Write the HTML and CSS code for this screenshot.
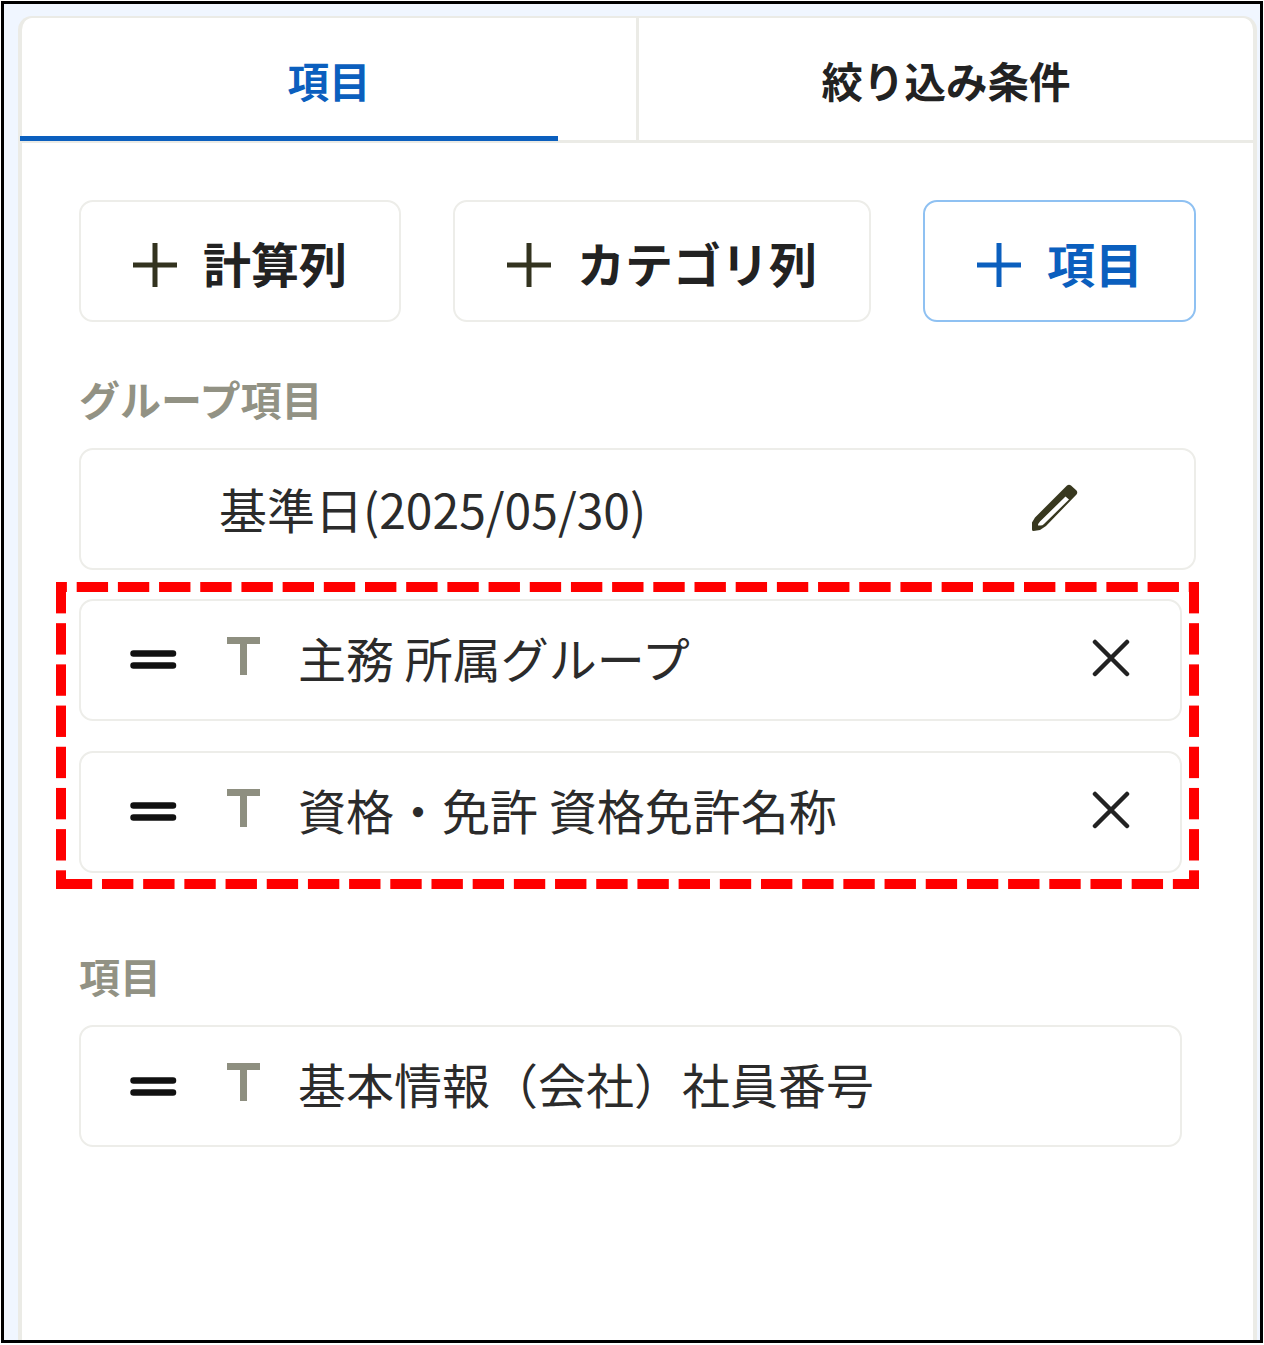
FILE: index.html
```html
<!DOCTYPE html>
<html lang="ja">
	<head>
		<meta charset="utf-8" />
		<title>項目</title>
		<link rel="stylesheet" href="styles.css">
	</head>
	<body>
		<div id="frame">
			<div id="panel">
				<nav class="tabs">
					<div class="tab active">項目</div>
					<div class="tab">絞り込み条件</div>
				</nav>

				<section class="content">
					<div class="buttons">
						<div class="btn">
							<svg class="plus" viewBox="0 0 44 44"><path d="M22 0V44M0 22H44" /></svg>
							<span>計算列</span>
						</div>
						<div class="btn">
							<svg class="plus" viewBox="0 0 44 44"><path d="M22 0V44M0 22H44" /></svg>
							<span>カテゴリ列</span>
						</div>
						<div class="btn primary">
							<svg class="plus" viewBox="0 0 44 44"><path d="M22 0V44M0 22H44" /></svg>
							<span>項目</span>
						</div>
					</div>

					<h2 class="group-label first">グループ項目</h2>
					<div class="row date">
						<span class="name">基準日(2025/05/30)</span>
						<svg class="pencil" viewBox="0 0 46 47"><path fill-rule="evenodd" d="M35 1.500Q37 0 39 1.500L44.500 6.500Q46 8.500 44.500 10.500L14 42L8 46L1.500 47Q0 47 0 45.500V38.500L3 33.500ZM33.500 12.500L8 37.500Q6 39.500 6 41.500H8.500Q10.500 41.500 12 40L37 15.500Z" /></svg>
					</div>

					<div class="highlight">
						<div class="row">
							<svg class="grip" viewBox="0 0 48 20"><path d="M3.500 3.500H43M3.500 15.500H43" /></svg>
							<svg class="type" viewBox="0 0 33 38"><path d="M0 3.500H33M16.500 3.500V38" /></svg>
							<span class="name">主務 所属グループ</span>
							<svg class="close" viewBox="0 0 38 38"><path d="M3 3L35 35M35 3L3 35" /></svg>
						</div>
						<div class="row">
							<svg class="grip" viewBox="0 0 48 20"><path d="M3.500 3.500H43M3.500 15.500H43" /></svg>
							<svg class="type" viewBox="0 0 33 38"><path d="M0 3.500H33M16.500 3.500V38" /></svg>
							<span class="name">資格・免許 資格免許名称</span>
							<svg class="close" viewBox="0 0 38 38"><path d="M3 3L35 35M35 3L3 35" /></svg>
						</div>
					</div>

					<h2 class="group-label second">項目</h2>
					<div class="row narrow">
						<svg class="grip" viewBox="0 0 48 20"><path d="M3.500 3.500H43M3.500 15.500H43" /></svg>
						<svg class="type" viewBox="0 0 33 38"><path d="M0 3.500H33M16.500 3.500V38" /></svg>
						<span class="name">基本情報（会社）社員番号</span>
					</div>
				</section>
			</div>
		</div>
	</body>
</html>
```

FILE: styles.css
```css
*{
	box-sizing: border-box;
}

body{
	margin: 0;
	background-color: #FFFFFF;
	font-family: "Noto Sans CJK JP", "Noto Sans", sans-serif;
}

#frame{
	width: 1262px;
	height: 1342px;
	margin: 1px;
	border: 3px solid #000000;
	padding: 12px 3px 0 14px;
	background-color: #F0F6FF;
}

#panel{
	height: 100%;
	background-color: #FFFFFF;
	border: 2px solid #EBEBE6;
	border-left-width: 4px;
	border-right-width: 4px;
	border-bottom: none;
	border-radius: 14px 14px 0 0;
}

.tabs{
	display: flex;
	height: 125px;
	border-bottom: 3px solid #EBEBE6;
}

.tab{
	flex: 1;
	display: flex;
	align-items: center;
	justify-content: center;
	padding-top: 3px;
	font-size: 41.5px;
	font-weight: bold;
	line-height: 1;
	color: #222222;
}

.tab + .tab{
	border-left: 3px solid #EBEBE6;
}

.tab.active{
	color: #0B5FBE;
	position: relative;
}

/* underline is shorter than the tab itself */
.tab.active::after{
	content: "";
	position: absolute;
	left: -2px;
	bottom: -1px;
	width: 538px;
	height: 5px;
	background-color: #0B5FBE;
}

.content{
	padding: 57px 57px 0 57px;
}

.buttons{
	display: flex;
	gap: 52px;
}

.btn{
	display: flex;
	align-items: center;
	gap: 26px;
	height: 122px;
	padding: 0 52px;
	border: 2px solid #EDEDE9;
	border-radius: 14px;
	font-size: 48px;
	font-weight: bold;
	line-height: 1;
	white-space: nowrap;
	color: #222222;
}

.btn span{
	margin-top: 2px;
}

.btn.primary{
	padding-right: 51px;
	border-color: #8FC1F2;
	color: #0B5FBE;
}

.plus{
	flex: none;
	width: 44px;
	height: 44px;
	margin-top: 8px;
	fill: none;
	stroke: #33331F;
	stroke-width: 5;
}

.primary .plus{
	stroke: #0B5FBE;
}

.group-label{
	margin: 0;
	font-size: 41px;
	font-weight: bold;
	line-height: 40px;
	color: #929284;
}

.group-label.first{
	margin-top: 56px;
	margin-bottom: 30px;
}

.group-label.second{
	margin-top: 66px;
	margin-bottom: 30px;
}

.row{
	display: flex;
	align-items: center;
	height: 122px;
	padding: 0 50px 0 49px;
	background-color: #FFFFFF;
	border: 2px solid #EDEDE9;
	border-radius: 14px;
}

.row.date{
	padding: 0 116px 0 138px;
	width: 1117px;
}

.row.narrow{
	width: 1103px;
}

.name{
	margin-bottom: 6px;
	font-size: 48px;
	line-height: 1;
	white-space: nowrap;
	color: #2B2B2B;
}

.date .name{
	margin-bottom: 2px;
}

.highlight{
	display: flex;
	flex-direction: column;
	gap: 30px;
	width: 1143px;
	height: 307px;
	margin: 12px -3px 0 -23px;
	padding: 17px 17px 0 23px;
	background-image:
		linear-gradient(90deg, #FF0000 31px, transparent 31px),
		linear-gradient(90deg, #FF0000 31px, transparent 31px),
		linear-gradient(180deg, #FF0000 31px, transparent 31px),
		linear-gradient(180deg, #FF0000 31px, transparent 31px);
	background-size: 41.2px 10px, 41.2px 10px, 10px 41.2px, 10px 41.2px;
	background-position: 20.7px 0, 4.8px 100%, 0 0, 100% 0;
	background-repeat: repeat-x, repeat-x, repeat-y, repeat-y;
}

.grip{
	flex: none;
	width: 48px;
	height: 20px;
	fill: none;
	stroke: #111111;
	stroke-width: 6.500;
	stroke-linecap: round;
}

.narrow .grip{
	margin-top: 2px;
}

.type{
	flex: none;
	width: 33px;
	height: 38px;
	margin: -8px 38px 0 49px;
	fill: none;
	stroke: #8E8F80;
	stroke-width: 7;
}

.close{
	flex: none;
	width: 38px;
	height: 38px;
	margin-left: auto;
	margin-bottom: 4px;
	fill: none;
	stroke: #222222;
	stroke-width: 4.500;
	stroke-linecap: round;
}

.pencil{
	flex: none;
	width: 46px;
	height: 47px;
	margin-left: auto;
	margin-bottom: 4px;
	fill: #38381F;
}
```
